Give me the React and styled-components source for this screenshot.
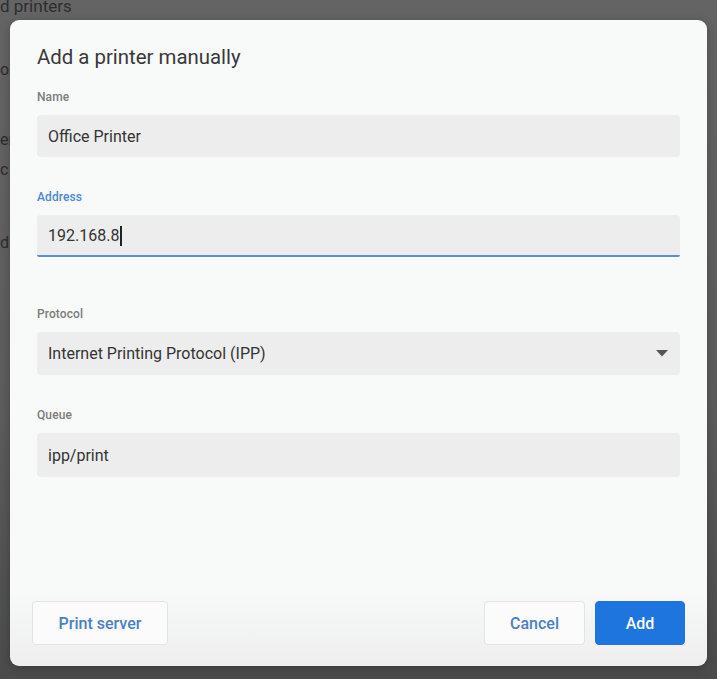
import React from "react";
import styled, { createGlobalStyle } from "styled-components";

const Global = createGlobalStyle`
  html, body { margin: 0; padding: 0; }
  body {
    width: 717px;
    height: 679px;
    overflow: hidden;
    font-family: Roboto, "Noto Sans", "Liberation Sans", sans-serif;
  }
`;

const Screen = styled.div`
  position: relative;
  width: 717px;
  height: 679px;
  overflow: hidden;
  background: linear-gradient(180deg, #646464 0%, #5c5c5c 60%, #4b4b4b 100%);
`;

const Backdrop = styled.div`
  display: flex;
  flex-direction: column;
  align-items: flex-start;
  color: #2e2e2e;
`;

const BackLine = styled.div`
  height: 20px;
  line-height: 20px;
  margin-top: ${(p) => p.$top}px;
  white-space: nowrap;
  font-size: ${(p) => p.$size || 16}px;
`;

const Dialog = styled.div`
  position: absolute;
  left: 10px;
  top: 20px;
  width: 697px;
  height: 646px;
  box-sizing: border-box;
  border-radius: 9px;
  background: linear-gradient(180deg, #f8f9f9 0%, #f8f9f9 88%, #eeeeee 100%);
  padding: 25px 22px 21px 27px;
  display: flex;
  flex-direction: column;
  box-shadow: 0 2px 8px rgba(0, 0, 0, 0.25);
`;

const Title = styled.h1`
  margin: 0;
  font-size: 20.4px;
  line-height: 24px;
  font-weight: 400;
  color: #383838;
`;

const Form = styled.div`
  flex: 1;
  display: flex;
  flex-direction: column;
  padding-right: 5px;
  padding-top: 20px;
`;

const Field = styled.div`
  display: flex;
  flex-direction: column;
  gap: 10px;
  margin-bottom: ${(p) => p.$after}px;
`;

const Label = styled.label`
  font-size: 12px;
  line-height: 16px;
  font-weight: 500;
  color: ${(p) => (p.$active ? "#4a89d2" : "#7c7c7c")};
  letter-spacing: 0.1px;
`;

const InputBox = styled.div`
  height: ${(p) => p.$h || 42}px;
  box-sizing: border-box;
  background: #ededee;
  border-radius: 4px;
  display: flex;
  align-items: center;
  justify-content: space-between;
  padding: 0 12px 0 11px;
  font-size: 16px;
  color: #343434;
  border-bottom: ${(p) => (p.$active ? "2px solid #5b90cc" : "none")};
  border-bottom-left-radius: ${(p) => (p.$active ? "2px" : "4px")};
  border-bottom-right-radius: ${(p) => (p.$active ? "2px" : "4px")};
  padding-top: ${(p) => (p.$active ? "2px" : "0")};
`;

const Caret = styled.span`
  display: inline-block;
  width: 1.5px;
  height: 20px;
  background: #222;
  vertical-align: middle;
  margin-left: 1px;
`;

const Footer = styled.div`
  display: flex;
  align-items: center;
  gap: 10px;
  margin-left: -5px;
`;

const Spacer = styled.div`
  flex: 1;
`;

const Button = styled.button`
  height: 44px;
  width: ${(p) => p.$w}px;
  box-sizing: border-box;
  border-radius: 4px;
  font-family: Roboto, "Noto Sans", "Liberation Sans", sans-serif;
  font-size: 16px;
  font-weight: 500;
  cursor: pointer;
  border: 1px solid ${(p) => (p.$primary ? "#1f75de" : "#e2e3e5")};
  background: ${(p) => (p.$primary ? "#1f75de" : "#fbfbfb")};
  color: ${(p) => (p.$primary ? "#ffffff" : "#4a80c4")};
`;

const Arrow = () => (
  <svg width="12" height="7" viewBox="0 0 12 7">
    <path d="M0 0 L12 0 L6 6.5 Z" fill="#555" />
  </svg>
);

export default function App() {
  return (
    <>
      <Global />
      <Screen>
        <Backdrop>
          <BackLine $top={-4} $size={17}>d printers</BackLine>
          <BackLine $top={44}>o</BackLine>
          <BackLine $top={50}>er</BackLine>
          <BackLine $top={10}>c</BackLine>
          <BackLine $top={53}>d</BackLine>
        </Backdrop>
        <Dialog>
          <Title>Add a printer manually</Title>
          <Form>
            <Field $after={32}>
              <Label>Name</Label>
              <InputBox>Office Printer</InputBox>
            </Field>
            <Field $after={49}>
              <Label $active>Address</Label>
              <InputBox $active>
                <span>
                  192.168.8
                  <Caret />
                </span>
              </InputBox>
            </Field>
            <Field $after={32}>
              <Label>Protocol</Label>
              <InputBox $h={43}>
                <span>Internet Printing Protocol (IPP)</span>
                <Arrow />
              </InputBox>
            </Field>
            <Field $after={0}>
              <Label>Queue</Label>
              <InputBox $h={44}>ipp/print</InputBox>
            </Field>
          </Form>
          <Footer>
            <Button $w={136}>Print server</Button>
            <Spacer />
            <Button $w={101}>Cancel</Button>
            <Button $w={90} $primary>
              Add
            </Button>
          </Footer>
        </Dialog>
      </Screen>
    </>
  );
}
